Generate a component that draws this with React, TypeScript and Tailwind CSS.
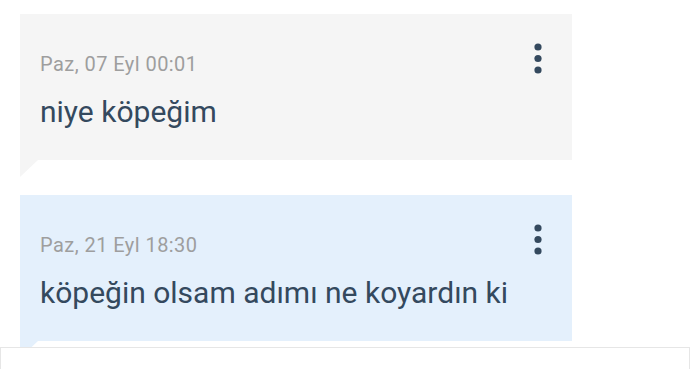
import React from "react";

interface Message {
  date: string;
  text: string;
  mine?: boolean;
}

const messages: Message[] = [
  { date: "Paz, 07 Eyl 00:01", text: "niye köpeğim" },
  { date: "Paz, 21 Eyl 18:30", text: "köpeğin olsam adımı ne koyardın ki", mine: true },
];

const MoreDots = () => (
  <svg width="10" height="34" viewBox="0 0 10 34" className="block">
    <circle cx="5" cy="5" r="3.6" fill="#34495e" />
    <circle cx="5" cy="16.5" r="3.6" fill="#34495e" />
    <circle cx="5" cy="28" r="3.6" fill="#34495e" />
  </svg>
);

const Bubble = ({ msg }: { msg: Message }) => {
  const bg = msg.mine ? "#e4f0fc" : "#f5f5f5";
  return (
    <div className="mb-[18px]">
      <div
        className={`relative w-[552px] pl-5 pt-[38px] pb-[30px] ${
          msg.mine ? "bg-[#e4f0fc]" : "bg-[#f5f5f5]"
        }`}
      >
        <div className="text-[20px] leading-[24px] text-[#9e9e9e] tracking-[0.45px]">
          {msg.date}
        </div>
        <div className="mt-[18px] text-[30px] leading-[36px] text-[#34495e]">
          {msg.text}
        </div>
        <button className="absolute right-[29px] top-[28px]">
          <MoreDots />
        </button>
      </div>
      <svg width="18" height="17" viewBox="0 0 18 17" className="block">
        <polygon points="0,0 18,0 0,17" fill={bg} />
      </svg>
    </div>
  );
};

export default function App() {
  return (
    <div
      className="relative w-[690px] h-[369px] overflow-hidden bg-white"
      style={{ fontFamily: "Roboto, 'Noto Sans', sans-serif" }}
    >
      <div className="pl-5 pt-[14px]">
        {messages.map((m, i) => (
          <Bubble key={i} msg={m} />
        ))}
      </div>
      {/* input bar peeking in at the bottom */}
      <div className="absolute left-0 right-0 top-[347px] h-[60px] bg-white border border-[#e6e6e6]" />
    </div>
  );
}
